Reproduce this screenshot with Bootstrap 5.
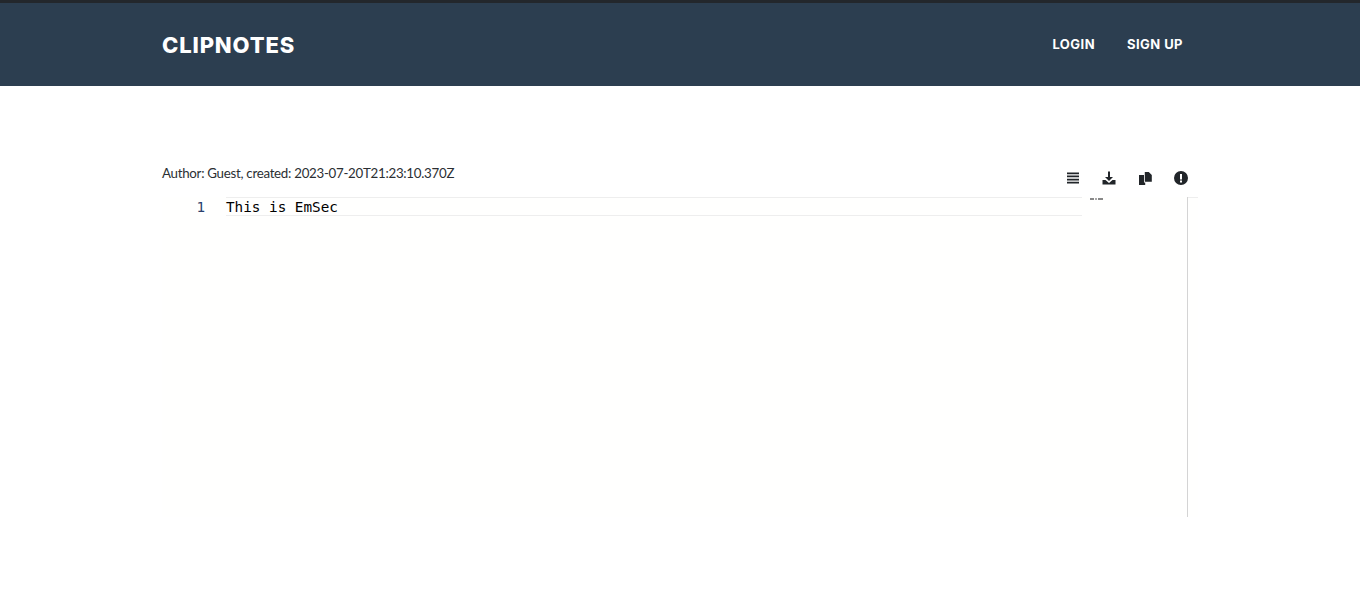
<!DOCTYPE html>
<html lang="en">
<head>
<meta charset="utf-8">
<title>Clipnotes</title>
<link href="https://cdn.jsdelivr.net/npm/bootstrap@5.3.0/dist/css/bootstrap.min.css" rel="stylesheet">
<style>
html, body { height: 100%; }
body { background: #fff; font-family: "Lato", sans-serif; color: #212529; overflow: hidden; }
.site-bar { background: #2c3e50; border-top: 3px solid #23272c; height: 86px; padding: 0; }
.site-wrap { width: 1036px; margin: 0 auto; padding: 0; }
.site-bar .navbar-brand { color: #fff; font-family: "Inter", sans-serif; font-weight: 800; font-size: 22px; letter-spacing: .85px; padding: 0; margin: 1px 0 0; line-height: 26px; }
.site-links { padding-right: 15px; margin-top: -2px; }
.site-links .nav-link { color: #fff; font-family: "Inter", sans-serif; font-weight: 700; font-size: 13px; letter-spacing: .45px; padding: 0 0 0 32px; line-height: 16px; }
.main-area { padding-top: 78px; }
.meta-row { height: 33px; }
.meta-text { font-size: 13.3px; line-height: 18px; letter-spacing: -.28px; color: #2b2f33; }
.tool-icons { gap: 18px; padding-right: 8px; padding-top: 5px; }
.tool-icons svg { display: block; width: 18px; height: 18px; fill: #212529; }
.editor-pane { height: 320px; background: #fffffe; }
.gutter { width: 64px; padding-top: 1px; font: 14.3px/19px "DejaVu Sans Mono", monospace; color: #2b3f6b; text-align: right; padding-right: 21px; }
.code-area { width: 856px; }
.code-line { height: 19px; border-top: 1px solid #eeeeee; border-bottom: 1px solid #eeeeee; font: 14.3px/18px "DejaVu Sans Mono", monospace; color: #000; white-space: pre; }
.mini-map { width: 105px; padding: 1px 0 0 8px; }
.mini-map i { display: block; width: 13px; height: 2px; background: linear-gradient(90deg, #888 0 4px, #fff 4px 5px, #aaa 5px 7px, #fff 7px 8px, #888 8px 13px); }
.scroll-strip { width: 11px; border-left: 1px solid #d4d4d4; }
.scroll-strip b { display: block; height: 1px; background: #eeeeee; }
</style>
</head>
<body>
<nav class="navbar site-bar">
  <div class="site-wrap d-flex align-items-center justify-content-between">
    <a class="navbar-brand" href="#">CLIPNOTES</a>
    <div class="nav site-links">
      <a class="nav-link" href="#">LOGIN</a>
      <a class="nav-link" href="#">SIGN UP</a>
    </div>
  </div>
</nav>
<main class="site-wrap main-area">
  <div class="d-flex justify-content-between meta-row">
    <div class="meta-text">Author: Guest, created: 2023-07-20T21:23:10.370Z</div>
    <div class="d-flex tool-icons">
      <svg viewBox="0 0 18 18"><path d="M3 3.500h12v1.700H3zM3 6.600h12v1.700H3zM3 9.700h12v1.700H3zM3 12.800h12v1.700H3z"/></svg>
      <svg viewBox="0 0 18 18"><path d="M8 2.500h2v5.500h3l-4 4-4-4h3zM2.500 11h3l3.500 3 3.500-3h3v4.500h-13z"/></svg>
      <svg viewBox="0 0 18 18"><path d="M8.800 3h4l3 3v6.800h-7zM3 6h5v7.500h1.200V16H3z"/></svg>
      <svg viewBox="0 0 18 18"><path fill-rule="evenodd" d="M9 2a7 7 0 1 1 0 14A7 7 0 0 1 9 2zM8 5v5.500h2V5zM8 11.500v2h2v-2z"/></svg>
    </div>
  </div>
  <div class="d-flex editor-pane">
    <div class="gutter">1</div>
    <div class="code-area"><div class="code-line">This is EmSec</div></div>
    <div class="mini-map"><i></i></div>
    <div class="scroll-strip"><b></b></div>
  </div>
</main>
<script src="https://cdn.jsdelivr.net/npm/bootstrap@5.3.0/dist/js/bootstrap.bundle.min.js"></script>
</body>
</html>
